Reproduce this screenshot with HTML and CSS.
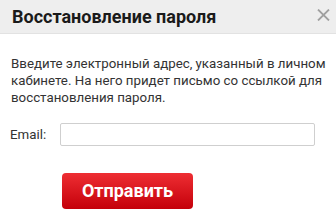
FILE: index.html
```
<!DOCTYPE html>
<html>
    <head>
        <title>Восстановление пароля</title>
        <link rel="stylesheet" href="styles.css">
    </head>
    <body>
        <div class="modal">
            <div class="modal-header">
                <h2>Восстановление пароля</h2>
                <span class="close">
                    <svg width="13" height="12" viewBox="0 0 13 12">
                        <path d="M1 0.5 L12 11.5 M12 0.5 L1 11.5" stroke="#a0a0a0" stroke-width="1.8" fill="none"/>
                    </svg>
                </span>
            </div>
            <div class="modal-body">
                <p class="info">Введите электронный адрес, указанный в личном кабинете. На него придет письмо со ссылкой для восстановления пароля.</p>
                <div class="row">
                    <label for="email">Email:</label>
                    <input type="text" id="email" class="field">
                </div>
                <div class="actions">
                    <div class="button">Отправить</div>
                </div>
            </div>
        </div>
    </body>
</html>
```
FILE: styles.css
```
body {
    margin: 0;
    font-family: Roboto, "Liberation Sans", sans-serif;
    background: #fff;
    color: #333;
}
.modal-header {
    height: 33px;
    background: #eeeeee;
    border-bottom: 1px solid #e2e2e2;
    display: flex;
    justify-content: space-between;
    padding: 0 6px 0 12px;
}
.modal-header h2 {
    margin: 0;
    font-size: 18px;
    line-height: 33px;
    font-weight: bold;
    color: #1a1a1a;
}
.close {
    padding-top: 6px;
    cursor: pointer;
}
.modal-body {
    padding: 0 8px 0 11px;
}
.info {
    margin: 21px 0 0;
    font-size: 13.3px;
    line-height: 17px;
    color: #333;
}
.row {
    display: flex;
    align-items: center;
    margin-top: 17px;
}
.row label {
    width: 50px;
    font-size: 13.3px;
    color: #333;
    margin-left: -1px;
}
.field {
    width: 255px;
    height: 23px;
    box-sizing: border-box;
    border: 1px solid #cfcfcf;
    border-radius: 2px;
    margin: 0;
    padding: 0 6px;
}
.actions {
    margin-top: 27px;
    padding-left: 51px;
}
.button {
    display: inline-block;
    width: 131px;
    height: 36px;
    line-height: 36px;
    text-align: center;
    color: #fff;
    font-size: 18px;
    font-weight: bold;
    border-radius: 4px;
    background: linear-gradient(#ee2e33, #c4000a);
    cursor: pointer;
    user-select: none;
}
```
